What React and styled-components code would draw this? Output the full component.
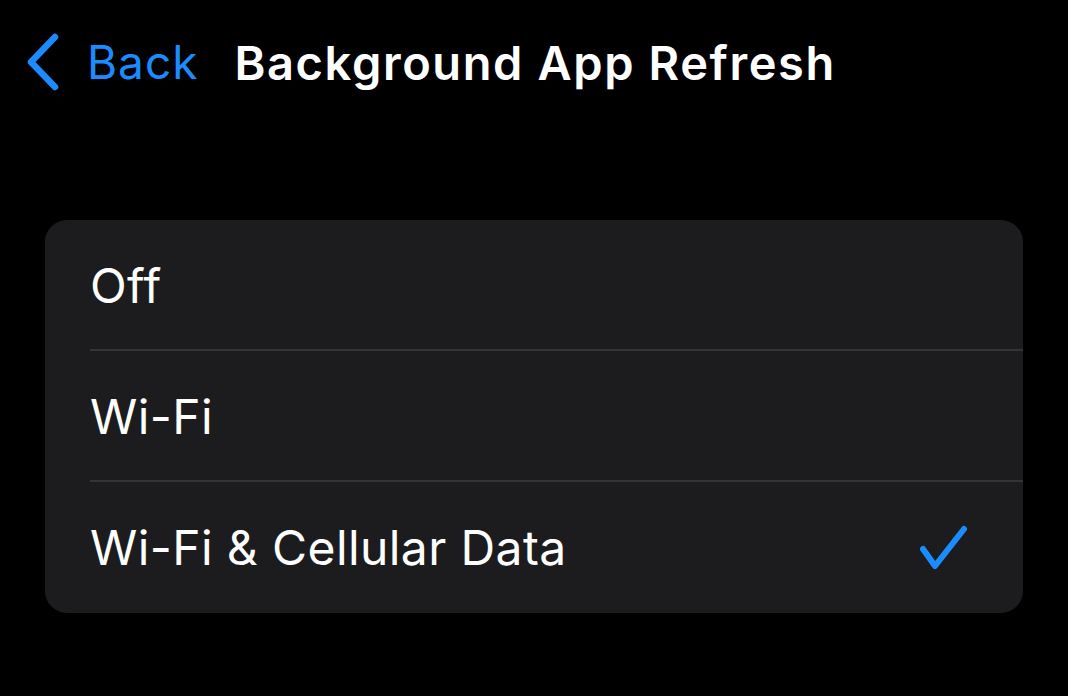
import React from "react";
import styled, { createGlobalStyle } from "styled-components";

const Global = createGlobalStyle`
  html, body { margin: 0; padding: 0; background: #000; }
  body { font-family: Inter, "Noto Sans", "Liberation Sans", sans-serif; -webkit-font-smoothing: antialiased; }
`;

const Page = styled.div`
  width: 1068px;
  height: 696px;
  background: #000;
  display: flex;
  flex-direction: column;
  overflow: hidden;
`;

const NavBar = styled.div`
  height: 124px;
  display: flex;
  align-items: center;
  padding-left: 25px;
  box-sizing: border-box;
`;

const BackButton = styled.div`
  display: flex;
  align-items: center;
  gap: 26px;
  color: #1a8cff;
  font-size: 46px;
  font-weight: 400;
  letter-spacing: 1px;
`;

const Title = styled.div`
  margin-left: 36px;
  color: #fff;
  font-size: 47px;
  font-weight: 600;
  letter-spacing: 1.6px;
`;

const Card = styled.div`
  margin: 96px 45px 0 45px;
  background: #1c1c1e;
  border-radius: 22px;
  overflow: hidden;
`;

const Row = styled.div`
  height: 131px;
  display: flex;
  align-items: center;
  justify-content: space-between;
  padding: 0 54px 0 45px;
  position: relative;
  box-sizing: border-box;
  color: #fff;
  font-size: 48px;
  letter-spacing: 0.4px;
  ${(p) =>
    p.$divider &&
    `&::after {
      content: "";
      position: absolute;
      left: 45px; right: 0; bottom: 0;
      height: 2px;
      background: #343436;
    }`}
`;

const Chevron = () => (
  <svg width="36" height="60" viewBox="0 0 36 60">
    <path d="M30 5 L6 30 L30 55" fill="none" stroke="#1a8cff" strokeWidth="6.5" strokeLinecap="round" strokeLinejoin="round" />
  </svg>
);

const Check = () => (
  <svg width="52" height="52" viewBox="0 0 52 52">
    <path d="M6 27 L18 44 L47 7" fill="none" stroke="#1a8cff" strokeWidth="6" strokeLinecap="round" strokeLinejoin="round" />
  </svg>
);

const options = ["Off", "Wi-Fi", "Wi-Fi & Cellular Data"];
const selected = 2;

export default function App() {
  return (
    <Page>
      <Global />
      <NavBar>
        <BackButton>
          <Chevron />
          <span>Back</span>
        </BackButton>
        <Title>Background App Refresh</Title>
      </NavBar>
      <Card>
        {options.map((o, i) => (
          <Row key={o} $divider={i < options.length - 1}>
            <span>{o}</span>
            {i === selected && <Check />}
          </Row>
        ))}
      </Card>
    </Page>
  );
}
